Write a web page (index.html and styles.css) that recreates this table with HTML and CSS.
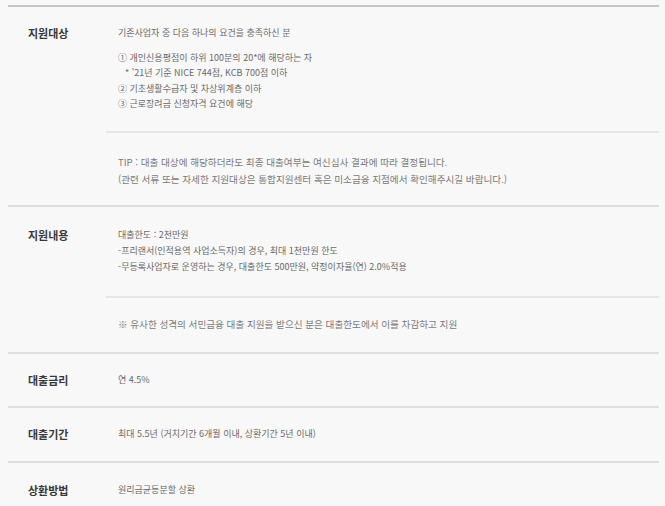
FILE: index.html
```html
<!DOCTYPE html>
<html lang="ko">
<head>
<meta charset="utf-8">
<link rel="stylesheet" href="styles.css">
</head>
<body>
<div class="table">
  <div class="row">
    <div class="label">지원대상</div>
    <div class="content">
      <div class="block first">
        <p class="lead">기존사업자 중 다음 하나의 요건을 충족하신 분</p>
        <p>① 개인신용평점이 하위 100분의 20*에 해당하는 자</p>
        <p class="indent">* '21년 기준 NICE 744점, KCB 700점 이하</p>
        <p>② 기초생활수급자 및 차상위계층 이하</p>
        <p>③ 근로장려금 신청자격 요건에 해당</p>
      </div>
      <div class="block tip">
        <p>TIP : 대출 대상에 해당하더라도 최종 대출여부는 여신심사 결과에 따라 결정됩니다.</p>
        <p>(관련 서류 또는 자세한 지원대상은 통합지원센터 혹은 미소금융 지점에서 확인해주시길 바랍니다.)</p>
      </div>
    </div>
  </div>
  <div class="row">
    <div class="label">지원내용</div>
    <div class="content">
      <div class="block">
        <p>대출한도 : 2천만원</p>
        <p>-프리랜서(인적용역 사업소득자)의 경우, 최대 1천만원 한도</p>
        <p>-무등록사업자로 운영하는 경우, 대출한도 500만원, 약정이자율(연) 2.0%적용</p>
      </div>
      <div class="block tip note">
        <p>※ 유사한 성격의 서민금융 대출 지원을 받으신 분은 대출한도에서 이를 차감하고 지원</p>
      </div>
    </div>
  </div>
  <div class="row single">
    <div class="label">대출금리</div>
    <div class="content"><div class="block"><p>연 4.5%</p></div></div>
  </div>
  <div class="row single">
    <div class="label">대출기간</div>
    <div class="content"><div class="block"><p>최대 5.5년 (거치기간 6개월 이내, 상환기간 5년 이내)</p></div></div>
  </div>
  <div class="row single last">
    <div class="label">상환방법</div>
    <div class="content"><div class="block"><p>원리금균등분할 상환</p></div></div>
  </div>
</div>
</body>
</html>
```
FILE: styles.css
```css
html, body {
  margin: 0;
  padding: 0;
  background: #f8f8f8;
}
body {
  font-family: "Noto Sans CJK KR", "Noto Sans", sans-serif;
  color: #6a6a6a;
}
p { margin: 0; }
.table {
  margin: 5px 6px 0 8px;
  border-top: 2px solid #c4c4c4;
}
.row {
  display: flex;
  border-bottom: 2px solid #dedede;
}
.row.last { border-bottom: none; }
.label {
  width: 98px;
  flex: none;
  box-sizing: border-box;
  padding-left: 20px;
  padding-top: 19px;
  font-size: 11px;
  font-weight: 700;
  line-height: 18px;
  color: #383838;
}
.content { flex: 1; }
.block {
  padding: 20px 0 21px 12px;
  font-size: 9px;
  line-height: 16px;
}
.block.first {
  padding-top: 18px;
  padding-bottom: 19px;
  line-height: 15.5px;
}
.block + .block { border-top: 2px solid #e6e6e6; }
.lead { margin-bottom: 9px; }
.indent { padding-left: 7px; }
.tip {
  color: #7a7a7a;
  font-size: 9.6px;
  line-height: 17px;
  padding-top: 21px;
  padding-bottom: 17px;
}
.tip.note { padding-top: 18px; padding-bottom: 19px; }
.row:first-child .label { padding-top: 17px; }
.single .label { padding-top: 17px; }
.single .block { padding-top: 18px; padding-bottom: 18.5px; }
.last .label { padding-top: 18px; }
.last .block { padding-top: 19px; }
```
